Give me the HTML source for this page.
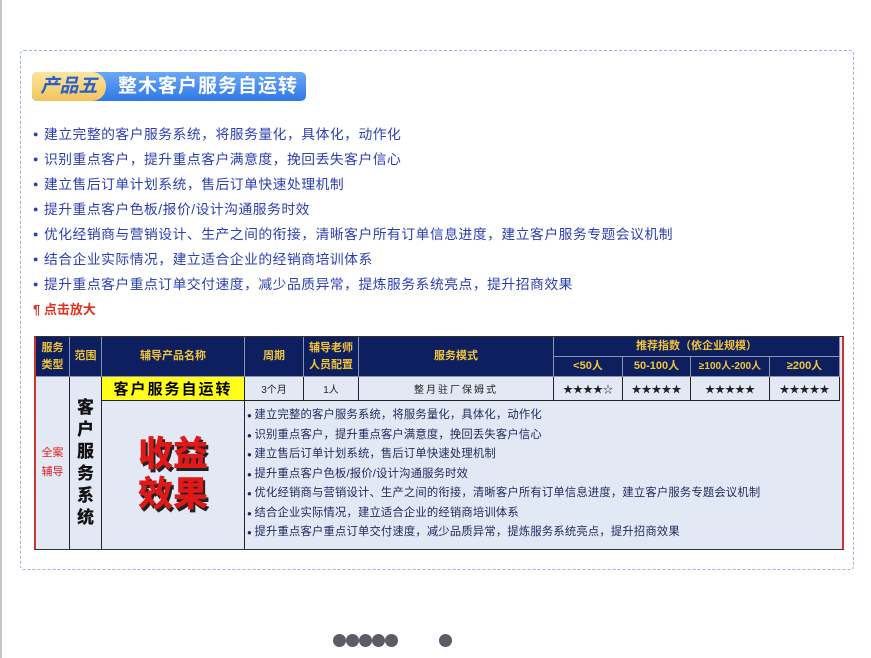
<!DOCTYPE html>
<html><head><meta charset="utf-8"><style>
body{margin:0;width:871px;height:658px;background:#fff;position:relative;overflow:hidden;font-family:"Liberation Sans","Noto Sans CJK SC",sans-serif}
.lb{position:absolute;left:0;top:0;width:2px;height:658px;background:#c8c8c8}
.box{position:absolute;left:20px;top:50px;width:832px;height:518px;border:1px dashed #9db4d8;border-radius:4px}
.title{position:absolute;left:32px;top:72px;width:274px;height:29px;border-radius:5px;background:linear-gradient(#6aa8f5,#2f78e6)}
.title .a{position:absolute;left:0;top:0;width:74px;height:29px;border-radius:5px 14px 14px 5px;background:linear-gradient(#fde6a0,#f2c45a);color:#2a5fd0;font-style:italic;font-weight:bold;font-size:19px;line-height:29px;text-align:center}
.title .b{position:absolute;left:86px;top:0;color:#fff;font-weight:bold;font-size:19px;line-height:29px;letter-spacing:1px}
.list{position:absolute;left:33px;top:122px;font-size:13.8px;color:#2c3fb0;letter-spacing:0.5px}
.list div{height:25px;line-height:25px;white-space:nowrap}
.list div:before{content:"●";font-size:9px;margin-right:5px;vertical-align:2px}
.red{position:absolute;left:33px;top:300px;color:#e0301e;font-size:13px;font-weight:bold;line-height:20px}
.tb{position:absolute;left:34px;top:336px;width:806px;height:212px;background:#e3e9f4;border:1px solid #333;border-left:2px solid #c33;border-right:2px solid #c33}
.c{position:absolute;box-sizing:border-box;border-right:1px solid #222;border-bottom:1px solid #222;display:flex;align-items:center;justify-content:center;text-align:center}
.h{background:#0d1f5e;color:#f2c53a;font-weight:bold;font-size:11px;line-height:17px;border-color:#8a94b0}
.s{font-size:10px;color:#222}
.body{position:absolute;left:211px;top:69px;font-size:11.3px;color:#1f2a60;letter-spacing:0.2px}
.body div{height:19.5px;line-height:19.5px;white-space:nowrap}
.body div:before{content:"● ";font-size:8px}
.big{color:#e01818;font-weight:900;font-size:35px;line-height:40px;text-shadow:2px 3px 0 #222;letter-spacing:0}
.dot{position:absolute;top:634px;width:13px;height:13px;border-radius:50%;background:#5a5d66}
</style></head><body>
<div class="lb"></div>
<div class="box"></div>
<div class="title"><div class="a">产品五</div><div class="b">整木客户服务自运转</div></div>
<div class="list">
<div>建立完整的客户服务系统，将服务量化，具体化，动作化</div>
<div>识别重点客户，提升重点客户满意度，挽回丢失客户信心</div>
<div>建立售后订单计划系统，售后订单快速处理机制</div>
<div>提升重点客户色板/报价/设计沟通服务时效</div>
<div>优化经销商与营销设计、生产之间的衔接，清晰客户所有订单信息进度，建立客户服务专题会议机制</div>
<div>结合企业实际情况，建立适合企业的经销商培训体系</div>
<div>提升重点客户重点订单交付速度，减少品质异常，提炼服务系统亮点，提升招商效果</div>
</div>
<div class="red">¶ 点击放大</div>
<div class="tb">
<div class="c h" style="left:0;top:0;width:34px;height:40px">服务<br>类型</div>
<div class="c h" style="left:34px;top:0;width:32px;height:40px">范围</div>
<div class="c h" style="left:66px;top:0;width:143px;height:40px">辅导产品名称</div>
<div class="c h" style="left:209px;top:0;width:59px;height:40px">周期</div>
<div class="c h" style="left:268px;top:0;width:55px;height:40px">辅导老师<br>人员配置</div>
<div class="c h" style="left:323px;top:0;width:195px;height:40px">服务模式</div>
<div class="c h" style="left:518px;top:0;width:286px;height:20px">推荐指数（依企业规模）</div>
<div class="c h" style="left:518px;top:20px;width:69px;height:20px">&lt;50人</div>
<div class="c h" style="left:587px;top:20px;width:68px;height:20px">50-100人</div>
<div class="c h" style="left:655px;top:20px;width:79px;height:20px;font-size:10px">≥100人-200人</div>
<div class="c h" style="left:734px;top:20px;width:70px;height:20px">≥200人</div>
<div class="c" style="left:0;top:40px;width:34px;height:172px;color:#e02020;font-size:11px;line-height:19px;border-bottom:none">全案<br>辅导</div>
<div class="c" style="left:34px;top:40px;width:32px;height:172px;font-weight:900;font-size:17px;line-height:22px;color:#111;border-bottom:none">客<br>户<br>服<br>务<br>系<br>统</div>
<div class="c" style="left:66px;top:40px;width:143px;height:24px;background:#ffff1a;font-weight:bold;font-size:15px;letter-spacing:2px">客户服务自运转</div>
<div class="c s" style="left:209px;top:40px;width:59px;height:24px">3个月</div>
<div class="c s" style="left:268px;top:40px;width:55px;height:24px">1人</div>
<div class="c s" style="left:323px;top:40px;width:195px;height:24px;letter-spacing:2px">整月驻厂保姆式</div>
<div class="c s" style="left:518px;top:40px;width:69px;height:24px">★★★★☆</div>
<div class="c s" style="left:587px;top:40px;width:68px;height:24px">★★★★★</div>
<div class="c s" style="left:655px;top:40px;width:79px;height:24px">★★★★★</div>
<div class="c s" style="left:734px;top:40px;width:70px;height:24px">★★★★★</div>
<div class="c" style="left:66px;top:64px;width:143px;height:148px;border-bottom:none"><div class="big">收益<br>效果</div></div>
<div class="body">
<div>建立完整的客户服务系统，将服务量化，具体化，动作化</div>
<div>识别重点客户，提升重点客户满意度，挽回丢失客户信心</div>
<div>建立售后订单计划系统，售后订单快速处理机制</div>
<div>提升重点客户色板/报价/设计沟通服务时效</div>
<div>优化经销商与营销设计、生产之间的衔接，清晰客户所有订单信息进度，建立客户服务专题会议机制</div>
<div>结合企业实际情况，建立适合企业的经销商培训体系</div>
<div>提升重点客户重点订单交付速度，减少品质异常，提炼服务系统亮点，提升招商效果</div>
</div>
</div>
<div class="dot" style="left:333px"></div><div class="dot" style="left:346px"></div><div class="dot" style="left:359px"></div><div class="dot" style="left:372px"></div><div class="dot" style="left:385px"></div>
<div class="dot" style="left:439px"></div>
</body></html>
